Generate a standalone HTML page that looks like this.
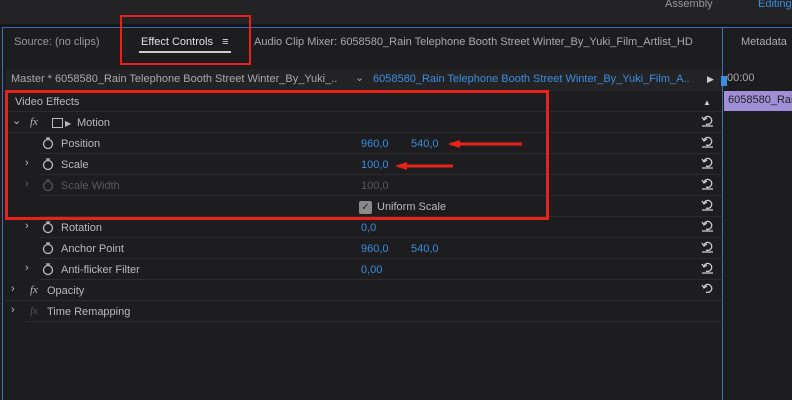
<!DOCTYPE html><html><head><meta charset="utf-8"><style>
*{margin:0;padding:0;box-sizing:border-box}
body{width:792px;height:400px;overflow:hidden;background:#1d1d1f;font-family:"Liberation Sans",sans-serif;font-size:11px;line-height:15px;color:#b9b9b9;position:relative}
.a{position:absolute;white-space:nowrap}
.row{position:absolute;left:0;width:722px;height:21px;border-bottom:1px solid #2c2c2e}
.blue{color:#3b8de0}
</style></head><body>
<div class="a" style="left:0;top:0;width:792px;height:24px;background:#232325"></div>
<div class="a" style="left:0;top:24px;width:792px;height:3px;background:#161618"></div>
<div class="a" style="left:665px;top:-3px;color:#999">Assembly</div>
<div class="a" style="left:758px;top:-3px;color:#3b8de0">Editing</div>
<div class="a" style="left:2px;top:27px;width:790px;height:373px;border-left:1px solid #3a6fb8;border-top:1px solid #3a6fb8"></div>
<div class="a" style="left:14px;top:35px;color:#9a9a9a">Source: (no clips)</div>
<div class="a" style="left:141px;top:35px;color:#e0e0e0">Effect Controls&nbsp;&nbsp;&nbsp;≡</div>
<div class="a" style="left:139px;top:51px;width:92px;height:2px;background:#ccc"></div>
<div class="a" style="left:254px;top:35px;color:#aaa">Audio Clip Mixer: 6058580_Rain Telephone Booth Street Winter_By_Yuki_Film_Artlist_HD</div>
<div class="a" style="left:741px;top:35px;color:#aaa">Metadata</div>
<div class="a" style="left:6px;top:69px;width:716px;height:22px;background:#232325;border-bottom:1px solid #2c2c2e"></div>
<div class="a" style="left:11px;top:72px;color:#aaa">Master * 6058580_Rain Telephone Booth Street Winter_By_Yuki_..</div>
<div class="a" style="left:355px;top:71px;color:#aaa">⌄</div>
<div class="a" style="left:373px;top:72px;color:#3b8de0">6058580_Rain Telephone Booth Street Winter_By_Yuki_Film_A..</div>
<div class="a" style="left:707px;top:72px;color:#ccc;font-size:9px">▶</div>
<div class="a" style="left:722px;top:27px;width:1px;height:373px;background:#3a6fb8"></div>
<div class="a" style="left:727px;top:71px;color:#aaa">00:00</div>
<div class="a" style="left:721px;top:76px;width:6px;height:10px;background:#3b8de0"></div>
<div class="a" style="left:724px;top:91px;width:68px;height:20px;background:#a08ed6;color:#222;padding:2px 4px">6058580_Rain</div>
<div class="a" style="left:703px;top:95px;color:#ccc;font-size:8px">▲</div>
<div class="row" style="top:91px;left:6px;width:716px"></div><div class="a" style="left:15px;top:95px">Video Effects</div>
<div class="row" style="top:112px;left:6px;width:716px"></div>
<div class="a" style="left:12px;top:114px">⌄</div><div class="a" style="left:30px;top:115px;font-style:italic;font-family:'Liberation Serif'">fx</div>
<div class="a" style="left:52px;top:118px;width:11px;height:10px;border:1px solid #bbb"></div><div class="a" style="left:65px;top:116px;font-size:8px">▶</div>
<div class="a" style="left:77px;top:116px">Motion</div>
<div class="row" style="top:133px;left:40px;width:682px"></div><div class="a" style="left:61px;top:137px">Position</div><div class="a blue" style="left:361px;top:137px">960,0</div><div class="a blue" style="left:411px;top:137px">540,0</div>
<div class="row" style="top:154px;left:40px;width:682px"></div><div class="a" style="left:61px;top:158px">Scale</div><div class="a blue" style="left:361px;top:158px">100,0</div>
<div class="row" style="top:175px;left:40px;width:682px"></div><div class="a" style="left:61px;top:179px;color:#5a5a5a">Scale Width</div><div class="a" style="left:361px;top:179px;color:#5a5a5a">100,0</div>
<div class="row" style="top:196px;left:40px;width:682px"></div><div class="a" style="left:359px;top:201px;width:13px;height:13px;background:#8a8a8a;border-radius:2px;color:#222;font-size:10px;text-align:center;line-height:13px">✓</div><div class="a" style="left:377px;top:200px">Uniform Scale</div>
<div class="row" style="top:217px;left:40px;width:682px"></div><div class="a" style="left:61px;top:221px">Rotation</div><div class="a blue" style="left:361px;top:221px">0,0</div>
<div class="row" style="top:238px;left:40px;width:682px"></div><div class="a" style="left:61px;top:242px">Anchor Point</div><div class="a blue" style="left:361px;top:242px">960,0</div><div class="a blue" style="left:411px;top:242px">540,0</div>
<div class="row" style="top:259px;left:40px;width:682px"></div><div class="a" style="left:61px;top:263px">Anti-flicker Filter</div><div class="a blue" style="left:361px;top:263px">0,00</div>
<div class="row" style="top:280px;left:6px;width:716px"></div><div class="a" style="left:30px;top:283px;font-style:italic;font-family:'Liberation Serif'">fx</div><div class="a" style="left:47px;top:284px">Opacity</div>
<div class="row" style="top:301px;left:26px;width:696px"></div><div class="a" style="left:30px;top:304px;font-style:italic;font-family:'Liberation Serif';color:#555">fx</div><div class="a" style="left:47px;top:305px">Time Remapping</div>
<div class="a" style="left:25px;top:156px">›</div><div class="a" style="left:25px;top:177px;color:#666">›</div><div class="a" style="left:25px;top:219px">›</div><div class="a" style="left:25px;top:261px">›</div><div class="a" style="left:11px;top:282px">›</div><div class="a" style="left:11px;top:303px">›</div>
<svg class="a" style="left:42px;top:136px" width="14" height="120" viewBox="0 0 14 120" fill="none" stroke="#bbb" stroke-width="1.3">
<g><circle cx="6" cy="8" r="4.5"/><path d="M4 2h4M6 2v2"/></g>
<g transform="translate(0,21)"><circle cx="6" cy="8" r="4.5"/><path d="M4 2h4M6 2v2"/></g>
<g transform="translate(0,42)" stroke="#555"><circle cx="6" cy="8" r="4.5"/><path d="M4 2h4M6 2v2"/></g>
<g transform="translate(0,84)"><circle cx="6" cy="8" r="4.5"/><path d="M4 2h4M6 2v2"/></g>
<g transform="translate(0,105)"><circle cx="6" cy="8" r="4.5"/><path d="M4 2h4M6 2v2"/></g>
</svg>
<svg class="a" style="left:42px;top:262px" width="14" height="16" fill="none" stroke="#bbb" stroke-width="1.3"><circle cx="6" cy="8" r="4.5"/><path d="M4 2h4M6 2v2"/></svg>
<svg class="a" style="left:700px;top:113px" width="16" height="180" fill="none" stroke="#ccc" stroke-width="1.3">
<g id="r"><path d="M4 6a4 4 0 1 1 2 5"/><path d="M2 4l2 3 3-2"/><path d="M2 13h11"/></g>
<use href="#r" y="21"/><use href="#r" y="42"/><use href="#r" y="63"/><use href="#r" y="84"/><use href="#r" y="105"/><use href="#r" y="126"/><use href="#r" y="147"/><use href="#r" y="168"/>
</svg>
<div class="a" style="left:120px;top:15px;width:131px;height:50px;border:2px solid #e8221b"></div>
<div class="a" style="left:5px;top:90px;width:544px;height:130px;border:3px solid #e8221b"></div>
<svg class="a" style="left:390px;top:134px" width="140" height="40"><path d="M60 10h72" stroke="#e8221b" stroke-width="3"/><path d="M58 10l12-4v8z" fill="#e8221b"/><path d="M8 32h55" stroke="#e8221b" stroke-width="3"/><path d="M5 32l12-4v8z" fill="#e8221b"/></svg>
</body></html>
